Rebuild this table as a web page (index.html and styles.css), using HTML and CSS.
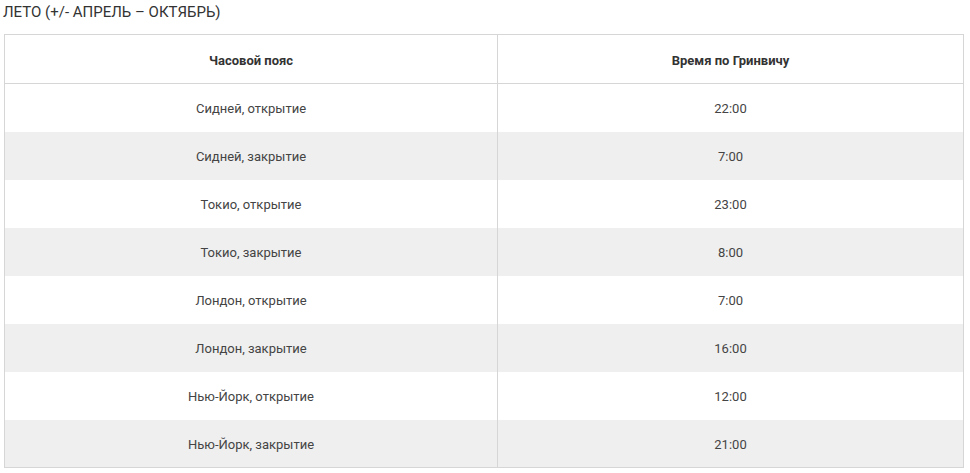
FILE: index.html
```html
<!DOCTYPE html>
<html lang="ru">
<head>
<meta charset="utf-8">
<link rel="stylesheet" href="styles.css">
</head>
<body>
<div class="page">
  <h3 class="title">ЛЕТО (+/- АПРЕЛЬ – ОКТЯБРЬ)</h3>
  <table class="times">
    <thead>
      <tr><th class="c1">Часовой пояс</th><th>Время по Гринвичу</th></tr>
    </thead>
    <tbody>
      <tr><td class="c1">Сидней, открытие</td><td>22:00</td></tr>
      <tr><td class="c1">Сидней, закрытие</td><td>7:00</td></tr>
      <tr><td class="c1">Токио, открытие</td><td>23:00</td></tr>
      <tr><td class="c1">Токио, закрытие</td><td>8:00</td></tr>
      <tr><td class="c1">Лондон, открытие</td><td>7:00</td></tr>
      <tr><td class="c1">Лондон, закрытие</td><td>16:00</td></tr>
      <tr><td class="c1">Нью-Йорк, открытие</td><td>12:00</td></tr>
      <tr><td class="c1">Нью-Йорк, закрытие</td><td>21:00</td></tr>
    </tbody>
  </table>
</div>
</body>
</html>
```
FILE: styles.css
```css
html, body {
  margin: 0;
  padding: 0;
  background: #fff;
}
.page {
  padding: 0 0 0 4px;
  font-family: Roboto, "Liberation Sans", sans-serif;
  color: #333;
}
.title {
  margin: 0 0 10px -1px;
  font-size: 15px;
  font-weight: 400;
  line-height: 24px;
  color: #333;
}
.times {
  width: 960px;
  border-collapse: collapse;
  border: 1px solid #d6d6d6;
  table-layout: fixed;
  font-size: 13px;
}
.times th, .times td {
  text-align: center;
  vertical-align: middle;
  height: 48px;
  padding: 2px 8px 0;
  box-sizing: border-box;
}
.times th {
  font-weight: 700;
  color: #333;
  height: 49px;
  border-bottom: 1px solid #d6d6d6;
}
.times .c1 {
  width: 493px;
  border-right: 1px solid #d6d6d6;
}
.times tbody tr:nth-child(even) {
  background: #efefef;
}
.times td {
  color: #444;
}
```
